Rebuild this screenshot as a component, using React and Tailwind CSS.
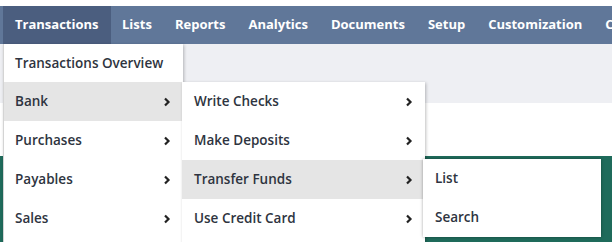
import React from "react";

const font = { fontFamily: '"Open Sans", "Noto Sans", sans-serif' };

function Chevron() {
  return (
    <svg width="8" height="10" viewBox="0 0 8 10" className="shrink-0">
      <polyline points="2,1.5 5.5,5 2,8.5" fill="none" stroke="#222" strokeWidth="2.2" strokeLinecap="butt" strokeLinejoin="miter" />
    </svg>
  );
}

function Row({ label, active, chevron, h = "h-[39px]", pl = "pl-3" }) {
  return (
    <div className={`${h} flex items-center justify-between ${pl} pr-3 ${active ? "bg-[#e5e5e5]" : "bg-white"}`}>
      <span className="text-[13.5px] font-semibold text-[#2e3440]">{label}</span>
      {chevron && <Chevron />}
    </div>
  );
}

export default function App() {
  const nav = ["Transactions", "Lists", "Reports", "Analytics", "Documents", "Setup", "Customization", "Commerce"];
  return (
    <div className="relative w-[612px] h-[242px] overflow-hidden bg-white" style={font}>
      <div className="h-[6px] bg-white" />
      <div className="h-[38px] bg-[#607799] flex items-stretch pl-[3px] whitespace-nowrap">
        {nav.map((n, i) => (
          <div key={n} className={`flex items-center px-[11.5px] text-[13px] font-bold text-white ${i === 0 ? "bg-[#4b5e7f] pl-3 pr-3" : ""}`}>
            {n}
          </div>
        ))}
      </div>
      <div className="h-[59px] bg-[#eeeff3]" />
      <div className="h-[53px] bg-white" />
      <div className="h-[86px] bg-[#1f6b5b]" />

      {/* Level 1 */}
      <div className="absolute left-[3px] top-[44px] w-[180px] pb-4 bg-white border-l border-[#d4d4d4] shadow-[1px_1px_3px_rgba(0,0,0,0.25)]">
        <Row label="Transactions Overview" h="h-[38px]" pl="pl-[11px]" />
        <Row label="Bank" active chevron pl="pl-[11px]" />
        <Row label="Purchases" chevron pl="pl-[11px]" />
        <Row label="Payables" chevron pl="pl-[11px]" />
        <Row label="Sales" chevron pl="pl-[11px]" />
      </div>

      {/* Level 2 */}
      <div className="absolute left-[182px] top-[82px] w-[243px] pb-4 bg-white shadow-[1px_1px_3px_rgba(0,0,0,0.25)]">
        <Row label="Write Checks" chevron />
        <Row label="Make Deposits" chevron />
        <Row label="Transfer Funds" active chevron />
        <Row label="Use Credit Card" chevron />
      </div>

      {/* Level 3 */}
      <div className="absolute left-[423px] top-[159px] w-[178px] bg-white shadow-[0_0_3px_rgba(0,0,0,0.35)]">
        <Row label="List" />
        <Row label="Search" />
      </div>
    </div>
  );
}
